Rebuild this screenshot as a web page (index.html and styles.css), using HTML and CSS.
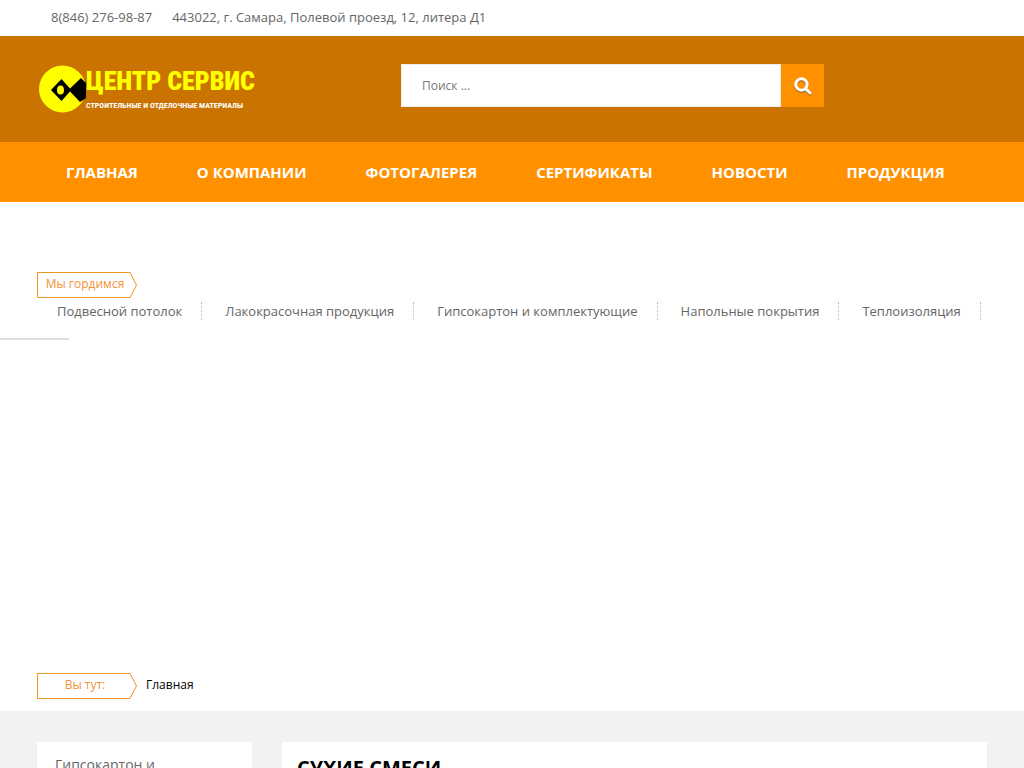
FILE: index.html
```html
<!DOCTYPE html>
<html lang="ru">
<head>
<meta charset="utf-8">
<title>Центр Сервис</title>
<meta name="viewport" content="width=device-width, initial-scale=1">
<link rel="stylesheet" href="styles.css">
</head>
<body>
<div class="topbar">
  <div class="container contacts"><span>8(846) 276-98-87</span><span>443022, г. Самара, Полевой проезд, 12, литера Д1</span></div>
</div>
<header class="header">
  <div class="container header-row">
    <a class="logo" href="#">
      <svg class="logo-mark" viewBox="0 0 48 50" aria-hidden="true">
        <circle cx="24.500" cy="25" r="23.500" fill="#ff0"/>
        <path d="M13 26 23.500 15 32 24.500 43 14 48 19V34L42 38 32 27.500 23.500 37Z" fill="#000"/>
        <ellipse cx="22.500" cy="26" rx="3.500" ry="4.500" fill="#ff0"/>
      </svg>
      <span class="logo-text">
        <span class="logo-name">ЦЕНТР СЕРВИС</span>
        <span class="logo-tag">СТРОИТЕЛЬНЫЕ И ОТДЕЛОЧНЫЕ МАТЕРИАЛЫ</span>
      </span>
    </a>
    <form class="search">
      <input class="search-input" type="search" placeholder="Поиск ..." aria-label="Поиск">
      <button class="search-button" type="submit" aria-label="Найти">
        <svg class="search-icon" viewBox="0 0 18 18" aria-hidden="true"><circle cx="7.500" cy="7.500" r="5.700"/><path d="m12 12 4 4"/></svg>
      </button>
    </form>
  </div>
</header>
<nav class="nav">
  <div class="container nav-row">
    <a href="#">ГЛАВНАЯ</a><a href="#">О КОМПАНИИ</a><a href="#">ФОТОГАЛЕРЕЯ</a><a href="#">СЕРТИФИКАТЫ</a><a href="#">НОВОСТИ</a><a href="#">ПРОДУКЦИЯ</a>
  </div>
</nav>
<section class="featured">
  <div class="container">
    <div class="tag"><svg class="tag-shape" viewBox="0 0 100 26" aria-hidden="true"><path d="M.5 .5H93L99.500 13 93 25.500H.5Z"/></svg><span>Мы гордимся</span></div>
    <div class="topics">
      <a href="#">Подвесной потолок</a><a href="#">Лакокрасочная продукция</a><a href="#">Гипсокартон и комплектующие</a><a href="#">Напольные покрытия</a><a href="#">Теплоизоляция</a>
    </div>
  </div>
  <div class="progress"></div>
</section>
<div class="container breadcrumb">
  <div class="tag"><svg class="tag-shape" viewBox="0 0 100 26" aria-hidden="true"><path d="M.5 .5H93L99.500 13 93 25.500H.5Z"/></svg><span>Вы тут:</span></div>
  <a href="#">Главная</a>
</div>
<main class="main">
  <div class="container columns">
    <aside class="sidebar"><a href="#">Гипсокартон и комплектующие</a></aside>
    <article class="article"><h1>СУХИЕ СМЕСИ</h1></article>
  </div>
</main>
</body>
</html>
```
FILE: styles.css
```css
* { box-sizing: border-box; }
body {
  display: flex;
  flex-direction: column;
  height: 100vh;
  margin: 0;
  overflow: hidden;
  background: #fff;
  color: #666;
  font: 13px/20px "Open Sans", sans-serif;
}
a { color: inherit; text-decoration: none; }
.container { width: 100%; max-width: 950px; margin: 0 auto; }
.topbar, .header, .nav, .featured, .breadcrumb { flex-shrink: 0; }
.topbar { padding: 7px 0 9px; }
.contacts { display: flex; gap: 20px; padding: 0 14px; }
.header { padding: 28px 0 26px; background: #ca7300; }
.header-row { display: flex; align-items: flex-start; min-height: 52px; }
.logo { display: flex; flex: 0 0 364px; padding-left: 1px; }
.logo-mark { width: 48px; height: 50px; }
.logo-text { display: flex; flex-direction: column; font-family: "Roboto Condensed", Roboto, sans-serif; white-space: nowrap; }
.logo-name { color: #ff0; font-size: 26px; font-weight: 900; line-height: 34px; }
.logo-tag { color: #fff; font-size: 8px; font-weight: 700; line-height: 16px; }
.search { display: flex; flex: 0 1 423px; height: 43px; }
.search-input {
  flex: 1;
  min-width: 0;
  padding: 0 20px;
  border: 1px solid #eee;
  border-radius: 0;
  background: #fff;
  color: #777;
  font: 12px "Open Sans", sans-serif;
}
.search-input::placeholder { color: #777; opacity: 1; }
.search-button { display: grid; place-items: center; width: 43px; padding: 0; border: 0; background: #ff9000; }
.search-icon { width: 18px; height: 18px; fill: none; stroke: #fff; stroke-width: 3; stroke-linecap: round; filter: drop-shadow(0 1px 0 #8b5a20); }
.nav { background: #ff9000; }
.nav-row { display: flex; gap: 59px; padding: 20px 29px; color: #fff; font-size: 15px; font-weight: 700; white-space: nowrap; }
.featured { padding-top: 70px; min-height: 471px; }
.tag { position: relative; width: 100px; height: 26px; padding-right: 4px; color: #f39237; font-size: 12px; line-height: 24px; text-align: center; }
.tag-shape { position: absolute; inset: 0; width: 100%; height: 100%; fill: none; stroke: #ec951f; }
.topics { display: flex; gap: 23px; padding: 4px 0 0 20px; white-space: nowrap; }
.topics a { height: 18px; padding-right: 19px; border-right: 1px dotted #bbb; line-height: 18px; }
.progress { width: 69px; height: 2px; margin-top: 18px; background: #ddd; }
.breadcrumb { display: flex; gap: 9px; height: 38px; color: #000; font-size: 12px; line-height: 24px; }
.main { flex: 1; min-height: 0; padding-top: 31px; overflow: hidden; background: #f2f2f2; }
.columns { display: flex; gap: 30px; align-items: flex-start; }
.sidebar { flex: 0 0 215px; padding: 13px 18px; background: #fff; font-size: 14px; }
.article { flex: 1; padding: 12px 15px 40px; background: #fff; }
.article h1 { margin: 0; color: #000; font-size: 20px; font-weight: 700; line-height: 28px; }
```
